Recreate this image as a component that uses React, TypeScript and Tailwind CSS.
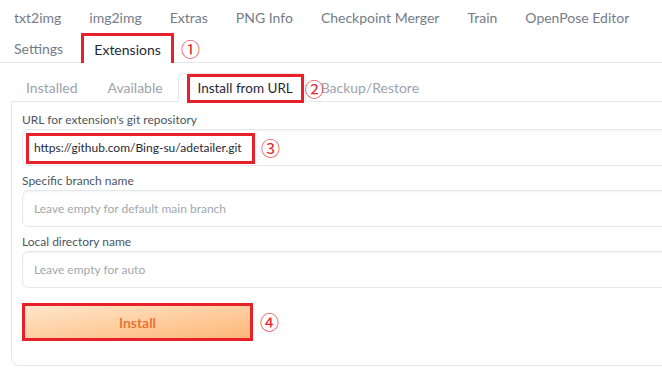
import React from "react";

const topRow1 = ["txt2img", "img2img", "Extras", "PNG Info", "Checkpoint Merger", "Train", "OpenPose Editor"];

const Mark = ({ n, className }: { n: string; className: string }) => (
	<span
		className={`absolute text-[19px] leading-none text-[#e8202a] ${className}`}
		style={{ fontFamily: '"Noto Sans CJK JP", "DejaVu Sans", sans-serif' }}
	>
		{n}
	</span>
);

const Field = ({ label, value, placeholder, marked }: { label: string; value?: string; placeholder?: string; marked?: boolean }) => (
	<div className="flex flex-col">
		<div className="h-[18px] text-[12px] leading-[18px] text-[#4b5563]">{label}</div>
		<div className="relative h-[37px] w-[700px] rounded-[6px] border border-[#e5e7eb] bg-white shadow-[inset_0_1px_3px_rgba(0,0,0,0.05)]">
			{marked && (
				<div className="absolute left-[3px] top-[3px] h-[31px] w-[229px] border-[3px] border-[#e8202a]" />
			)}
			<div className={`absolute left-[11px] top-0 h-full flex items-center text-[12px] ${value ? "text-[#1f2937]" : "text-[#a3a8b0]"}`}>
				{value ?? placeholder}
			</div>
			{marked && <Mark n="③" className="left-[238px] top-[8px]" />}
		</div>
	</div>
);

export default function App() {
	return (
		<div className="relative w-[662px] h-[369px] overflow-hidden bg-white" style={{ fontFamily: '"Lato", "Noto Sans", sans-serif' }}>
			{/* main tabs */}
			<div className="w-[720px] border-b border-[#e5e7eb]">
				<div className="flex h-[34px] items-center text-[14px] text-[#757c88]">
					{topRow1.map((t) => (
						<div key={t} className="px-[14px]">{t}</div>
					))}
				</div>
				<div className="flex h-[28px] items-end text-[14px]">
					<div className="flex h-[28px] items-center px-[14px] text-[#757c88]">Settings</div>
					<div className="relative ml-[4px] flex h-[30px] w-[93px] items-center justify-center border-[3px] border-b-0 border-[#e8202a] bg-white -mb-px text-[#1f2937]">
						Extensions
						<Mark n="①" className="left-[97px] top-[3px]" />
					</div>
				</div>
			</div>

			{/* extension sub tabs */}
			<div className="ml-[11px] mt-[10px] w-[720px]">
				<div className="flex h-[29px] items-end border-b border-[#e5e7eb] text-[14px]">
					<div className="flex h-full items-center px-[15px] text-[#9ca3af]">Installed</div>
					<div className="flex h-full items-center px-[15px] text-[#9ca3af]">Available</div>
					<div className="relative flex h-[29px] w-[128px] items-center rounded-t-[6px] border border-b-0 border-[#e5e7eb] bg-white -mb-px">
						<div className="absolute left-[8px] top-0 flex h-[29px] w-[117px] items-center justify-center border-[3px] border-[#e8202a] text-[13.5px] text-[#1f2937]">
							Install from URL
						</div>
						<Mark n="②" className="left-[126px] top-[5px]" />
					</div>
					<div className="flex h-full items-center pl-[15px] text-[#9ca3af]">Backup/Restore</div>
				</div>
				<div className="h-[264px] rounded-b-[8px] border border-t-0 border-[#e5e7eb] px-[10px] pt-[9px]">
					<div className="flex flex-col gap-[6px]">
						<Field label="URL for extension's git repository" value="https://github.com/Bing-su/adetailer.git" marked />
						<Field label="Specific branch name" placeholder="Leave empty for default main branch" />
						<Field label="Local directory name" placeholder="Leave empty for auto" />
					</div>
					<div className="relative mt-[15px] h-[38px] w-[231px]">
						<button className="flex h-full w-full items-center justify-center border-[3px] border-[#e8202a] bg-gradient-to-br from-[#fee6cb] to-[#fdb776] text-[14px] font-semibold text-[#ea6a2c]">
							Install
						</button>
						<Mark n="④" className="left-[238px] top-[9px]" />
					</div>
				</div>
			</div>
		</div>
	);
}
